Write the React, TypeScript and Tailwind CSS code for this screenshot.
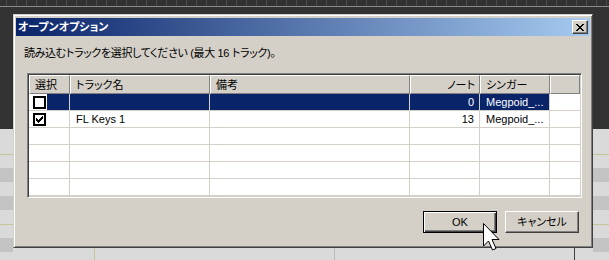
import React from "react";

const F = "[font-family:'Liberation_Sans','Noto_Sans_CJK_JP',sans-serif] [font-feature-settings:'palt']";

function TopStrip() {
  const ticks = Array.from({ length: 61 });
  return (
    <div className="h-[14px] flex flex-col bg-[#323232]">
      <div className="h-[6px] flex pl-[6px] overflow-hidden">
        {ticks.map((_, i) => (
          <div key={i} className="shrink-0 w-[10px] h-[6px] border-l border-[#4c4c4c]" />
        ))}
      </div>
      <div className="h-[1px] bg-[#8a8a8a]" />
      <div className="flex-1" />
    </div>
  );
}

function SideStrip({ w }: { w: string }) {
  return (
    <div className={`${w} shrink-0 flex flex-col`}>
      <div className="h-[115px] bg-[#323232]" />
      <div className="h-[25px] bg-[#dadada]" />
      <div className="h-[1px] bg-[#c8c49a]" />
      <div className="h-[13px] bg-[#dadada]" />
      <div className="h-[14px] bg-[#c3c3c3]" />
      <div className="h-[14px] bg-[#dadada]" />
      <div className="h-[14px] bg-[#c3c3c3]" />
      <div className="h-[14px] bg-[#dadada]" />
      <div className="h-[1px] bg-[#c8c49a]" />
      <div className="h-[13px] bg-[#dadada]" />
      <div className="h-[10px] bg-[#c3c3c3]" />
    </div>
  );
}

function BottomStrip() {
  return (
    <div className="h-[12px] flex bg-[#dadada]">
      <div className="w-[13px] shrink-0 flex flex-col">
        <div className="h-[4px] bg-[#c3c3c3]" />
      </div>
      <div className="w-[81px] shrink-0" />
      <div className="w-[1px] shrink-0 bg-[#c8c49a]" />
      <div className="w-[239px] shrink-0" />
      <div className="w-[1px] shrink-0 bg-[#bcbcbc]" />
      <div className="w-[239px] shrink-0" />
      <div className="w-[1px] shrink-0 bg-[#404040]" />
      <div className="w-[18px] shrink-0" />
      <div className="w-[16px] shrink-0 flex flex-col">
        <div className="h-[4px] bg-[#c3c3c3]" />
      </div>
    </div>
  );
}

function XGlyph() {
  return (
    <svg width="8" height="7" viewBox="0 0 8 7" shapeRendering="crispEdges">
      <g fill="#000">
        <rect x="0" y="0" width="2" height="1" />
        <rect x="6" y="0" width="2" height="1" />
        <rect x="1" y="1" width="2" height="1" />
        <rect x="5" y="1" width="2" height="1" />
        <rect x="2" y="2" width="4" height="1" />
        <rect x="3" y="3" width="2" height="1" />
        <rect x="2" y="4" width="4" height="1" />
        <rect x="1" y="5" width="2" height="1" />
        <rect x="5" y="5" width="2" height="1" />
        <rect x="0" y="6" width="2" height="1" />
        <rect x="6" y="6" width="2" height="1" />
      </g>
    </svg>
  );
}

function CloseBtn() {
  return (
    <div className="w-[16px] h-[14px] flex items-center justify-center bg-[#d4d0c8] border border-t-white border-l-white border-r-[#404040] border-b-[#404040] shadow-[inset_-1px_-1px_0_#808080]">
      <XGlyph />
    </div>
  );
}

function Check() {
  return (
    <svg width="7" height="7" viewBox="0 0 7 7" shapeRendering="crispEdges">
      <g fill="#000">
        <rect x="6" y="0" width="1" height="1" />
        <rect x="5" y="1" width="2" height="1" />
        <rect x="0" y="2" width="1" height="1" />
        <rect x="4" y="2" width="3" height="1" />
        <rect x="0" y="3" width="2" height="1" />
        <rect x="3" y="3" width="3" height="1" />
        <rect x="0" y="4" width="5" height="1" />
        <rect x="1" y="5" width="3" height="1" />
        <rect x="2" y="6" width="1" height="1" />
      </g>
    </svg>
  );
}

function Checkbox({ checked }: { checked: boolean }) {
  return (
    <div className="w-[13px] h-[13px] shrink-0 bg-white border-2 border-black flex items-center justify-center">
      {checked && <Check />}
    </div>
  );
}

type Row = { checked: boolean; name: string; memo: string; notes: string; singer: string; sel: boolean } | null;

const rows: Row[] = [
  { checked: false, name: "", memo: "", notes: "0", singer: "Megpoid_...", sel: true },
  { checked: true, name: "FL Keys 1", memo: "", notes: "13", singer: "Megpoid_...", sel: false },
  null,
  null,
  null,
  null,
];

function HeaderCell({ w, children, right }: { w: string; children?: React.ReactNode; right?: boolean }) {
  return (
    <div
      className={`${w} h-[19px] flex items-center border border-white border-r-[#808080] border-b-[#808080] ${
        right ? "justify-end pr-[4px]" : "pl-[5px]"
      } ${F} text-[11px] leading-[14px] text-black whitespace-nowrap overflow-hidden`}
    >
      {children}
    </div>
  );
}

function List() {
  const navy = "bg-[#0a246a] text-white";
  return (
    <div className="ml-[11px] mt-[13px] w-[555px] h-[125px] bg-white border border-t-[#808080] border-l-[#808080] border-r-white border-b-white shadow-[inset_1px_1px_0_#404040,inset_-1px_-1px_0_#d4d0c8] p-[1px] flex flex-col overflow-hidden">
      <div className="flex bg-[#d4d0c8]">
        <HeaderCell w="w-[41px] shrink-0">選択</HeaderCell>
        <HeaderCell w="w-[140px] shrink-0">トラック名</HeaderCell>
        <HeaderCell w="w-[200px] shrink-0">備考</HeaderCell>
        <HeaderCell w="w-[70px] shrink-0" right>
          ノート
        </HeaderCell>
        <HeaderCell w="w-[70px] shrink-0">シンガー</HeaderCell>
        <HeaderCell w="flex-1" />
      </div>
      {rows.map((r, i) => (
        <div key={i} className={`flex h-[17px] shrink-0 border-b border-[#d4d0c8] ${F} text-[11px] leading-[16px]`}>
          <div className="w-[41px] shrink-0 flex items-center pl-[4px] border-r border-[#d4d0c8]">
            {r && <Checkbox checked={r.checked} />}
            {r && r.sel && <div className={`ml-[1px] flex-1 h-full ${navy}`} />}
          </div>
          <div className={`w-[140px] shrink-0 pl-[6px] border-r border-[#d4d0c8] whitespace-nowrap ${r && r.sel ? navy : "text-black"}`}>
            {r ? r.name : ""}
          </div>
          <div className={`w-[200px] shrink-0 pl-[6px] border-r border-[#d4d0c8] ${r && r.sel ? navy : "text-black"}`}>
            {r ? r.memo : ""}
          </div>
          <div className={`w-[70px] shrink-0 pr-[5px] text-right border-r border-[#d4d0c8] ${r && r.sel ? navy : "text-black"}`}>
            {r ? r.notes : ""}
          </div>
          <div className={`w-[70px] shrink-0 pl-[6px] border-r border-[#d4d0c8] whitespace-nowrap ${r && r.sel ? navy : "text-black"}`}>
            {r ? r.singer : ""}
          </div>
          <div className="flex-1" />
        </div>
      ))}
    </div>
  );
}

function Dialog() {
  return (
    <div className="w-[580px] h-[234px] shrink-0 flex flex-col bg-[#d4d0c8] border border-t-[#d4d0c8] border-l-[#d4d0c8] border-r-[#404040] border-b-[#404040] shadow-[inset_1px_1px_0_#ffffff,inset_-1px_-1px_0_#808080] px-[2px] pt-[3px]">
      <div className="h-[18px] shrink-0 flex items-center justify-between pl-[2px] pr-[2px] bg-[linear-gradient(to_right,#0a246a,#a6caf0)]">
        <span className={`${F} text-[11px] font-bold leading-[18px] text-white`}>オープンオプション</span>
        <CloseBtn />
      </div>
      <div className={`${F} ml-[8px] mt-[10px] h-[14px] text-[11px] leading-[14px] tracking-[-0.35px] text-black whitespace-nowrap`}>
        読み込むトラックを選択してください (最大 16 トラック)。
      </div>
      <List />
      <div className="mt-[13px] flex justify-end gap-[8px] pr-[11px]">
        <div className="w-[74px] h-[22px] flex items-center justify-center border border-black shadow-[inset_1px_1px_0_#ffffff,inset_-1px_-1px_0_#404040,inset_-2px_-2px_0_#808080] bg-[#d4d0c8]">
          <span className={`${F} text-[11px] leading-[14px] text-black`}>OK</span>
        </div>
        <div className="w-[74px] h-[22px] flex items-center justify-center border border-t-white border-l-white border-r-[#404040] border-b-[#404040] shadow-[inset_-1px_-1px_0_#808080] bg-[#d4d0c8]">
          <span className={`${F} text-[11px] leading-[14px] text-black`}>キャンセル</span>
        </div>
      </div>
    </div>
  );
}

function Cursor() {
  return (
    <svg
      className="absolute left-[482px] top-[222px]"
      width="19"
      height="30"
      viewBox="0 0 19 30"
    >
      <path
        d="M1.5 1.5 L1.5 24 L6.5 19 L10.5 28 L14 26.5 L10 17.5 L17 17.5 Z"
        fill="#ffffff"
        stroke="#000000"
        strokeWidth="1"
        strokeLinejoin="miter"
      />
    </svg>
  );
}

export default function App() {
  return (
    <div className="relative w-[609px] h-[260px] overflow-hidden bg-[#323232] flex flex-col">
      <TopStrip />
      <div className="flex h-[234px] shrink-0">
        <SideStrip w="w-[13px]" />
        <Dialog />
        <SideStrip w="w-[16px]" />
      </div>
      <BottomStrip />
      <Cursor />
    </div>
  );
}
